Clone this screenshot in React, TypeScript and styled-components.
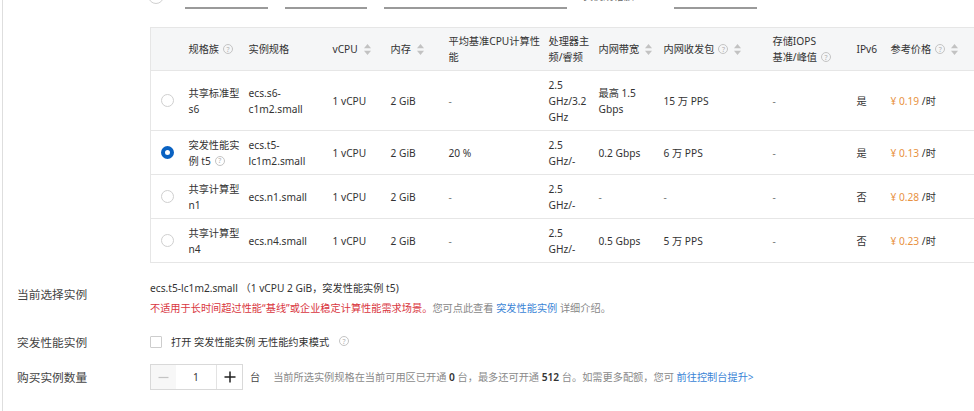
import React from "react";
import styled, { createGlobalStyle } from "styled-components";

const GlobalStyle = createGlobalStyle`
  html, body { margin: 0; padding: 0; background: #fff; }
  body {
    width: 974px;
    height: 411px;
    overflow: hidden;
    font-family: "Noto Sans", "Noto Sans CJK SC", sans-serif;
    color: #333;
  }
`;

const Page = styled.div`
  margin-left: 2px;
  border-left: 1px solid #dedede;
  height: 411px;
  box-sizing: border-box;
  display: flex;
  flex-direction: column;
`;

/* ---------- partially visible filter bar at the very top ---------- */
const FilterBar = styled.div`
  height: 10px;
  overflow: hidden;
  display: flex;
  align-items: flex-end;
  padding-left: 145px;
`;

const PartialRadio = styled.span`
  width: 14px;
  height: 14px;
  border: 1px solid #d0d0d0;
  border-radius: 50%;
  margin-bottom: 6px;
  flex: none;
`;

const FilterLine = styled.span<{ $w: number; $ml: number }>`
  width: ${(p) => p.$w}px;
  margin-left: ${(p) => p.$ml}px;
  height: 18px;
  border-bottom: 2px solid #9a9a9a;
  margin-bottom: 1px;
  flex: none;
`;

const FilterText = styled.span<{ $ml: number }>`
  margin-left: ${(p) => p.$ml}px;
  font-size: 10.2px;
  line-height: 14px;
  color: #666;
  margin-bottom: 7px;
  white-space: nowrap;
  display: inline-flex;
  align-items: center;
  flex: none;
`;

/* ---------- table ---------- */
const TableWrap = styled.div`
  padding-left: 147px;
  margin-top: 17px;
`;

const Table = styled.table`
  border-collapse: collapse;
  table-layout: fixed;
  width: 842px;
  font-size: 10.2px;
  line-height: 16px;
  border: 1px solid #e6e6e6;
`;

const Col = styled.col<{ $w: number }>`
  width: ${(p) => p.$w}px;
`;

const Th = styled.th`
  background: #f5f6f7;
  font-weight: normal;
  text-align: left;
  padding: 5px 0 5px 8px;
  vertical-align: middle;
  white-space: nowrap;
  color: #333;
`;

const Td = styled.td<{ $muted?: boolean }>`
  padding: 5.5px 0 5.5px 8px;
  border-top: 1px solid #e6e6e6;
  vertical-align: middle;
  white-space: nowrap;
  color: ${(p) => (p.$muted ? "#777" : "#333")};
`;

const RadioTd = styled.td`
  padding: 0 0 0 10px;
  border-top: 1px solid #e6e6e6;
  vertical-align: middle;
`;

const Radio = styled.span<{ $checked?: boolean }>`
  display: block;
  width: 13px;
  height: 13px;
  box-sizing: border-box;
  border-radius: 50%;
  background: #fff;
  border: ${(p) => (p.$checked ? "4px solid #0a62c2" : "1px solid #cfcfcf")};
`;

const Price = styled.span`
  color: #e8923f;
`;

const HelpIcon = styled.span`
  display: inline-flex;
  align-items: center;
  justify-content: center;
  width: 10px;
  height: 10px;
  box-sizing: border-box;
  border: 1px solid #c4c4c4;
  border-radius: 50%;
  font-size: 7px;
  line-height: 1;
  color: #b0b0b0;
  margin-left: 4px;
  vertical-align: middle;
  position: relative;
  top: -1px;
`;

const SortWrap = styled.span`
  display: inline-block;
  margin-left: 6px;
  vertical-align: middle;
  line-height: 0;
  position: relative;
  top: -1px;
`;

const SortIcon = () => (
  <SortWrap>
    <svg width="7" height="11" viewBox="0 0 7 11">
      <path d="M3.5 0 L7 4.2 H0 Z" fill="#c2c2c2" />
      <path d="M0 6.8 H7 L3.5 11 Z" fill="#c2c2c2" />
    </svg>
  </SortWrap>
);

const Help = () => <HelpIcon>?</HelpIcon>;

/* ---------- form rows below ---------- */
const FormRow = styled.div<{ $mt: number; $align?: string }>`
  display: grid;
  grid-template-columns: 133px 1fr;
  padding-left: 14px;
  margin-top: ${(p) => p.$mt}px;
  align-items: ${(p) => p.$align ?? "center"};
`;

const Label = styled.div<{ $pt?: number }>`
  font-size: 11.7px;
  line-height: 20px;
  color: #444;
  padding-top: ${(p) => p.$pt ?? 0}px;
  white-space: nowrap;
`;

const ValueBlock = styled.div`
  font-size: 10.2px;
  line-height: 20px;
  white-space: nowrap;
`;

const Line = styled.div<{ $color?: string }>`
  color: ${(p) => p.$color ?? "#333"};
`;

const Gray = styled.span`
  color: #888;
`;

const Link = styled.a`
  color: #3a84d6;
  text-decoration: none;
`;

const Inline = styled.div`
  display: flex;
  align-items: center;
  font-size: 10.2px;
  line-height: 20px;
  white-space: nowrap;
`;

const Checkbox = styled.span`
  width: 12px;
  height: 12px;
  box-sizing: border-box;
  border: 1px solid #cdcdcd;
  border-radius: 1px;
  margin-right: 9px;
  flex: none;
`;

const CheckText = styled.span`
  color: #333;
  margin-right: 6px;
`;

const Stepper = styled.div`
  display: flex;
  width: 93px;
  height: 26px;
  box-sizing: border-box;
  border: 1px solid #d9d9d9;
  flex: none;
`;

const StepBtn = styled.span<{ $disabled?: boolean }>`
  width: 25px;
  display: flex;
  align-items: center;
  justify-content: center;
  background: ${(p) => (p.$disabled ? "#f7f7f7" : "#fff")};
  flex: none;
`;

const StepInput = styled.span`
  flex: 1;
  display: flex;
  align-items: center;
  justify-content: center;
  font-size: 10.2px;
  color: #333;
  border-right: 1px solid #e3e3e3;
`;

const Unit = styled.span`
  margin-left: 7px;
  color: #444;
`;

const Note = styled.span`
  margin-left: 13px;
  color: #8a8a8a;
`;

const Strong = styled.b`
  color: #333;
  font-weight: 600;
`;

type RowData = {
  family: React.ReactNode;
  spec: React.ReactNode;
  base: string;
  freq: React.ReactNode;
  bw: React.ReactNode;
  pps: string;
  ipv6: string;
  price: string;
  checked?: boolean;
};

const rows: RowData[] = [
  {
    family: (<>共享标准型<br />s6</>),
    spec: (<>ecs.s6-<br />c1m2.small</>),
    base: "-",
    freq: (<>2.5<br />GHz/3.2<br />GHz</>),
    bw: (<>最高 1.5<br />Gbps</>),
    pps: "15 万 PPS",
    ipv6: "是",
    price: "¥ 0.19",
  },
  {
    family: (<>突发性能实<br />例 t5<Help /></>),
    spec: (<>ecs.t5-<br />lc1m2.small</>),
    base: "20 %",
    freq: (<>2.5<br />GHz/-</>),
    bw: "0.2 Gbps",
    pps: "6 万 PPS",
    ipv6: "是",
    price: "¥ 0.13",
    checked: true,
  },
  {
    family: (<>共享计算型<br />n1</>),
    spec: "ecs.n1.small",
    base: "-",
    freq: (<>2.5<br />GHz/-</>),
    bw: "-",
    pps: "-",
    ipv6: "否",
    price: "¥ 0.28",
  },
  {
    family: (<>共享计算型<br />n4</>),
    spec: "ecs.n4.small",
    base: "-",
    freq: (<>2.5<br />GHz/-</>),
    bw: "0.5 Gbps",
    pps: "5 万 PPS",
    ipv6: "否",
    price: "¥ 0.23",
  },
];

const widths = [30, 60, 84, 58, 58, 100, 50, 65, 109, 84, 34, 110];

export default function App() {
  return (
    <>
      <GlobalStyle />
      <Page>
        <FilterBar>
          <PartialRadio />
          <FilterLine $w={83} $ml={21} />
          <FilterLine $w={82} $ml={17} />
          <FilterLine $w={183} $ml={17} />
          <FilterText $ml={16}>
            实例规格族
            <Help />
          </FilterText>
          <FilterLine $w={83} $ml={26} />
        </FilterBar>

        <TableWrap>
          <Table>
            <colgroup>
              {widths.map((w, i) => (
                <Col key={i} $w={w} />
              ))}
            </colgroup>
            <thead>
              <tr>
                <Th />
                <Th>
                  规格族
                  <Help />
                </Th>
                <Th>实例规格</Th>
                <Th>
                  vCPU
                  <SortIcon />
                </Th>
                <Th>
                  内存
                  <SortIcon />
                </Th>
                <Th>
                  平均基准CPU计算性
                  <br />能
                </Th>
                <Th>
                  处理器主
                  <br />
                  频/睿频
                </Th>
                <Th>
                  内网带宽
                  <SortIcon />
                </Th>
                <Th>
                  内网收发包
                  <Help />
                  <SortIcon />
                </Th>
                <Th>
                  存储IOPS
                  <br />
                  基准/峰值
                  <Help />
                </Th>
                <Th>IPv6</Th>
                <Th>
                  参考价格
                  <Help />
                  <SortIcon />
                </Th>
              </tr>
            </thead>
            <tbody>
              {rows.map((r, i) => (
                <tr key={i}>
                  <RadioTd>
                    <Radio $checked={r.checked} />
                  </RadioTd>
                  <Td>{r.family}</Td>
                  <Td>{r.spec}</Td>
                  <Td>1 vCPU</Td>
                  <Td>2 GiB</Td>
                  <Td $muted={r.base === "-"}>{r.base}</Td>
                  <Td>{r.freq}</Td>
                  <Td $muted={r.bw === "-"}>{r.bw}</Td>
                  <Td $muted={r.pps === "-"}>{r.pps}</Td>
                  <Td $muted>-</Td>
                  <Td>{r.ipv6}</Td>
                  <Td>
                    <Price>{r.price}</Price> /时
                  </Td>
                </tr>
              ))}
            </tbody>
          </Table>
        </TableWrap>

        <FormRow $mt={15} $align="start">
          <Label $pt={6}>当前选择实例</Label>
          <ValueBlock>
            <Line>ecs.t5-lc1m2.small （1 vCPU 2 GiB，突发性能实例 t5)</Line>
            <Line $color="#d9363e">
              不适用于长时间超过性能“基线”或企业稳定计算性能需求场景。
              <Gray>您可点此查看 </Gray>
              <Link>突发性能实例</Link>
              <Gray> 详细介绍。</Gray>
            </Line>
          </ValueBlock>
        </FormRow>

        <FormRow $mt={14}>
          <Label>突发性能实例</Label>
          <Inline>
            <Checkbox />
            <CheckText>打开 突发性能实例 无性能约束模式</CheckText>
            <Help />
          </Inline>
        </FormRow>

        <FormRow $mt={12}>
          <Label>购买实例数量</Label>
          <Inline>
            <Stepper>
              <StepBtn $disabled>
                <svg width="11" height="11" viewBox="0 0 11 11">
                  <path d="M0.5 5.5 H10.5" stroke="#c4c4c4" strokeWidth="1.2" />
                </svg>
              </StepBtn>
              <StepInput>1</StepInput>
              <StepBtn>
                <svg width="12" height="12" viewBox="0 0 12 12">
                  <path d="M0.5 6 H11.5 M6 0.5 V11.5" stroke="#222" strokeWidth="1.5" />
                </svg>
              </StepBtn>
            </Stepper>
            <Unit>台</Unit>
            <Note>
              当前所选实例规格在当前可用区已开通 <Strong>0</Strong> 台，最多还可开通 <Strong>512</Strong> 台。如需更多配额，您可{" "}
              <Link>前往控制台提升&gt;</Link>
            </Note>
          </Inline>
        </FormRow>
      </Page>
    </>
  );
}
